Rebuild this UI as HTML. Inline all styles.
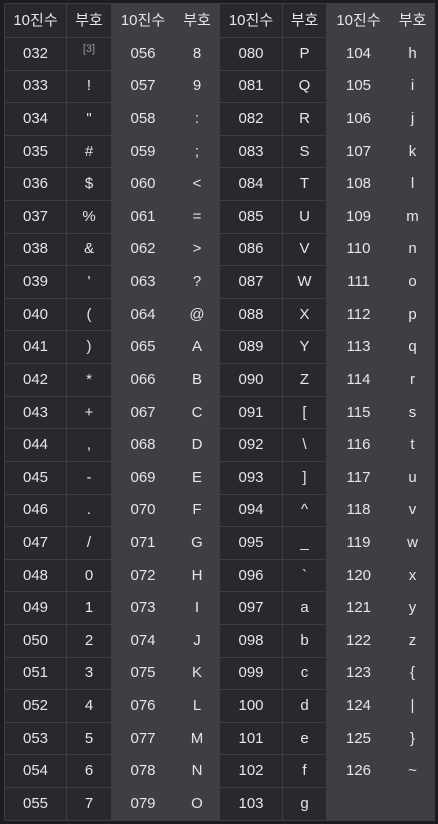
<!DOCTYPE html><html><head><meta charset="utf-8"><style>
body{margin:0;background:#1c1d20;width:438px;height:824px;overflow:hidden;font-family:"Liberation Sans","Noto Sans CJK KR",sans-serif;}
table{position:absolute;left:4px;top:3px;border-collapse:collapse;table-layout:fixed;color:#e6e6e6;font-size:15px;}
td,th{border:1px solid #3c3e43;text-align:center;padding:0;line-height:16px;}
tr{height:32.62px}
tr.h{height:34px}
th{font-weight:normal;font-size:15px}
.a{background:#27292d}.b{background:#3d3f44}
.s{font-size:11px;color:#9a9a9a;position:relative;top:-5px}
</style></head><body>
<table>
<colgroup><col style="width:62px"><col style="width:45px"><col style="width:63px"><col style="width:45px"><col style="width:63px"><col style="width:44px"><col style="width:64px"><col style="width:44px"></colgroup>
<tr class="h"><th class="a">10진수</th><th class="a">부호</th><th class="b">10진수</th><th class="b">부호</th><th class="a">10진수</th><th class="a">부호</th><th class="b">10진수</th><th class="b">부호</th></tr>
<tbody id="t"></tbody>
</table>
<script>
var c2=['[3]','!','"','#','$','%','&',"'",'(',')','*','+',',','-','.','/','0','1','2','3','4','5','6','7'];
var c4='89:;<=>?@ABCDEFGHIJKLMNO'.split('');
var c6='PQRSTUVWXYZ[\\]^_`abcdefg'.split('');
var c8='hijklmnopqrstuvwxyz{|}~'.split('');c8.push('');
function e(s){return s.replace(/&/g,'&amp;').replace(/</g,'&lt;')}
function p(n){return String(n).padStart(3,'0')}
var h='';
for(var i=0;i<24;i++){
h+='<tr><td class="a">'+p(32+i)+'</td><td class="a">'+(i==0?'<span class="s">[3]</span>':e(c2[i]))+'</td><td class="b">'+p(56+i)+'</td><td class="b">'+e(c4[i])+'</td><td class="a">'+p(80+i)+'</td><td class="a">'+e(c6[i])+'</td><td class="b">'+(i<23?p(104+i):'')+'</td><td class="b">'+e(c8[i])+'</td></tr>';
}
document.getElementById('t').innerHTML=h;
</script>
</body></html>
